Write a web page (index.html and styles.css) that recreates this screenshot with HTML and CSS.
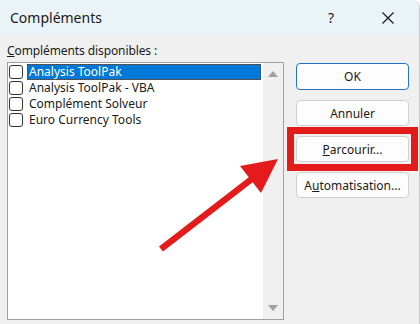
FILE: index.html
```html
<!DOCTYPE html>
<html lang="fr">

<head>
    <meta charset="UTF-8">
    <title>Compléments</title>
    <link rel="stylesheet" href="styles.css">
</head>

<body>
    <div class="dialog">
        <div class="titlebar">
            <span class="title">Compléments</span>
            <span class="help">?</span>
            <span class="close">
                <svg width="14" height="14" viewBox="0 0 14 14">
                    <path d="M1.5 1.5 L12.5 12.5 M12.5 1.5 L1.5 12.5" stroke="#1a1a1a" stroke-width="1.2" fill="none" />
                </svg>
            </span>
        </div>
        <div class="content">
            <div class="left">
                <div class="caption"><u>C</u>ompléments disponibles :</div>
                <div class="listbox">
                    <ul class="items">
                        <li class="item selected"><span class="check"></span><span class="name">Analysis ToolPak</span></li>
                        <li class="item"><span class="check"></span><span class="name">Analysis ToolPak - VBA</span></li>
                        <li class="item"><span class="check"></span><span class="name">Complément Solveur</span></li>
                        <li class="item"><span class="check"></span><span class="name">Euro Currency Tools</span></li>
                    </ul>
                    <div class="scrollbar">
                        <span class="tri up"></span>
                        <span class="tri down"></span>
                    </div>
                </div>
            </div>
            <div class="buttons">
                <button class="btn default">OK</button>
                <button class="btn">Annuler</button>
                <div class="mark">
                    <button class="btn"><u>P</u>arcourir...</button>
                </div>
                <button class="btn">A<u>u</u>tomatisation...</button>
            </div>
        </div>
        <svg class="pointer" width="420" height="324" viewBox="0 0 420 324">
            <line x1="161" y1="249" x2="253" y2="178" stroke="#e41b1b" stroke-width="6.5" />
            <polygon points="240,166 278,159 261,193" fill="#e41b1b" />
        </svg>
    </div>
</body>

</html>
```

FILE: styles.css
```css
body {
    margin: 0;
    font-family: "Noto Sans", "Open Sans", sans-serif;
    font-size: 12px;
    color: #1a1a1a;
}

.dialog {
    position: relative;
    width: 420px;
    height: 324px;
    background: #f0f0f0;
    overflow: hidden;
    box-sizing: border-box;
    border-right: 1px solid #c8c8c8;
    border-top-right-radius: 8px;
}

.titlebar {
    height: 35px;
    display: flex;
    align-items: center;
    background: #eaf3f7;
    padding-left: 10px;
}

.title {
    font-size: 14px;
    flex: 1;
}

.help {
    font-size: 14px;
    width: 53px;
}

.close {
    display: flex;
    width: 38px;
}

.content {
    display: flex;
    padding-left: 7px;
}

.caption {
    height: 27px;
    line-height: 31px;
    font-size: 12px;
    letter-spacing: -0.1px;
}

.listbox {
    display: flex;
    width: 277px;
    height: 258px;
    box-sizing: border-box;
    border: 1px solid #a0a0a0;
    background: #fff;
}

.items {
    list-style: none;
    margin: 0;
    padding: 1px 0 0 1px;
    flex: 1;
}

.item {
    display: flex;
    align-items: center;
    height: 16px;
}

.check {
    width: 12px;
    height: 12px;
    border: 1px solid #333;
    border-radius: 3px;
    background: #fff;
    margin-right: 4px;
}

.name {
    flex: 1;
    height: 16px;
    line-height: 16px;
    padding-left: 2px;
    margin-right: 2px;
}

.selected .name {
    background: #0078d7;
    color: #fff;
    outline: 1px dotted #444;
    outline-offset: -1px;
}

.scrollbar {
    width: 20px;
    background: #f0f0f0;
    display: flex;
    flex-direction: column;
    justify-content: space-between;
    align-items: center;
    padding: 8px 0 8px;
}

.tri {
    width: 0;
    height: 0;
    border-left: 5px solid transparent;
    border-right: 5px solid transparent;
}

.tri.up {
    border-bottom: 6px solid #a0a0a0;
}

.tri.down {
    border-top: 6px solid #a0a0a0;
}

.buttons {
    display: flex;
    flex-direction: column;
    gap: 10px;
    margin-left: 12px;
    padding-top: 28px;
}

.btn {
    display: block;
    width: 113px;
    height: 26px;
    font-family: inherit;
    font-size: 12px;
    color: #1a1a1a;
    background: #fdfdfd;
    border: 1px solid #d0d0d0;
    border-radius: 4px;
    padding: 0;
}

.btn.default {
    height: 27px;
    border: 1px solid #1f75c9;
}

.mark {
    margin: -9px;
    padding: 2px;
    border: 7px solid #e41b1b;
}

.pointer {
    position: absolute;
    left: 0;
    top: 0;
    pointer-events: none;
}
```
